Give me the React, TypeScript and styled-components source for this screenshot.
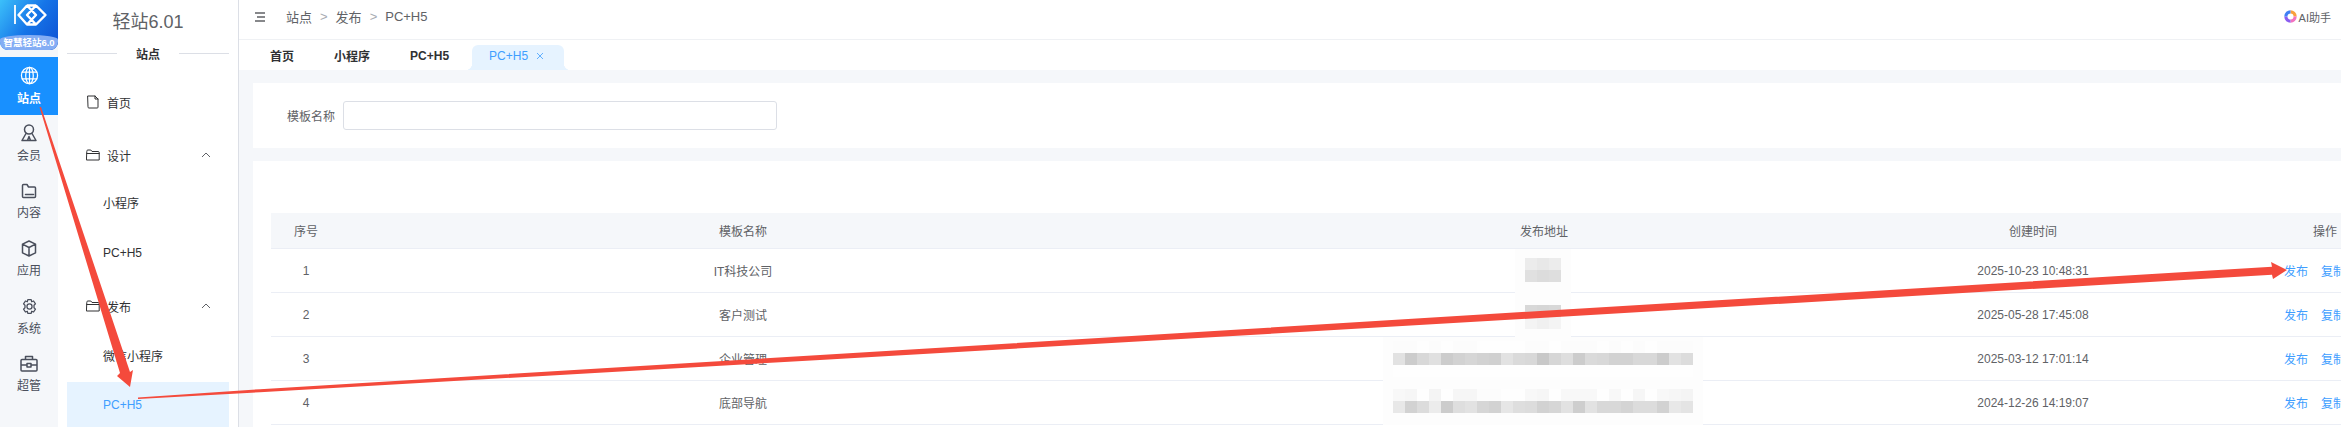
import styled, { createGlobalStyle } from "styled-components";
import { ReactNode } from "react";

const FONT = `"Liberation Sans", "Noto Sans CJK SC", sans-serif`;

const GlobalStyle = createGlobalStyle`
  html, body {
    margin: 0;
    height: 100%;
    overflow: hidden;
    background: #ffffff;
  }
  body {
    font-family: ${FONT};
    color: #606266;
  }
`;

const Page = styled.div`
  position: relative;
  display: flex;
  width: 2341px;
  height: 427px;
  overflow: hidden;
`;

const Rail = styled.aside`
  flex: 0 0 58px;
  background: #f5f7fa;
  display: flex;
  flex-direction: column;
`;

const LogoTile = styled.div`
  position: relative;
  height: 50px;
  margin-bottom: 7px;
  border-radius: 0 0 8px 8px;
  background: linear-gradient(125deg, #3cc0fa 0%, #1675e8 50%, #0d4fd2 100%);
  overflow: hidden;
`;

const LogoBand = styled.div`
  position: absolute;
  left: 0;
  right: 0;
  bottom: 0;
  height: 15px;
  border-radius: 50% 50% 8px 8px / 30% 30% 8px 8px;
  background: #84adf4;
  color: #ffffff;
  font-size: 9.5px;
  font-weight: 700;
  line-height: 15px;
  text-align: center;
  white-space: nowrap;
`;

const RailItem = styled.div<{ $active?: boolean }>`
  height: ${({ $active }) => ($active ? "58px" : "57.6px")};
  flex: none;
  display: flex;
  flex-direction: column;
  align-items: center;
  justify-content: center;
  gap: 4px;
  font-size: 12px;
  font-weight: ${({ $active }) => ($active ? 700 : 400)};
  color: ${({ $active }) => ($active ? "#ffffff" : "#4a4f5c")};
  background: ${({ $active }) => ($active ? "#1890ff" : "transparent")};
  svg {
    display: block;
  }
`;

const SubNav = styled.aside`
  flex: none;
  width: 162px;
  border-right: 1px solid #dcdfe6;
  padding: 0 9px;
  display: flex;
  flex-direction: column;
`;

const SubTitle = styled.div`
  height: 44px;
  line-height: 44px;
  text-align: center;
  font-size: 18px;
  color: #606266;
`;

const Divider = styled.div`
  display: flex;
  align-items: center;
  height: 18px;
  font-size: 12px;
  font-weight: 700;
  color: #303133;
  margin-bottom: 10px;
  &::before,
  &::after {
    content: "";
    flex: 1;
    height: 1px;
    background: #dcdfe6;
  }
  span {
    padding: 0 19px;
  }
`;

const NavRow = styled.div<{ $height: number; $active?: boolean; $indent?: boolean; $below?: number }>`
  height: ${({ $height }) => $height}px;
  box-sizing: border-box;
  padding-bottom: ${({ $below }) => $below ?? 0}px;
  display: flex;
  align-items: center;
  gap: 7px;
  padding-left: ${({ $indent }) => ($indent ? "36px" : "19px")};
  font-size: 12px;
  color: ${({ $active }) => ($active ? "#409eff" : "#303133")};
  background: ${({ $active }) => ($active ? "#e6f3ff" : "transparent")};
`;

const Chevron = styled.svg`
  margin-left: auto;
  margin-right: 18px;
`;

const Main = styled.main`
  flex: 1;
  min-width: 0;
  display: flex;
  flex-direction: column;
  background: #f5f7fa;
`;

const TopBar = styled.header`
  flex: none;
  background: #ffffff;
  border-bottom: 1px solid #eff1f4;
  display: flex;
  align-items: center;
  padding: 0 10px 6px 15px;
  height: 33px;
  font-size: 13px;
  color: #606266;
`;

const Crumbs = styled.div`
  display: flex;
  align-items: center;
  gap: 8px;
  margin-left: 20px;
  i {
    font-style: normal;
    color: #a8abb2;
  }
`;

const Assistant = styled.div`
  margin-left: auto;
  display: flex;
  align-items: center;
  gap: 2px;
  font-size: 11px;
`;

const TabBar = styled.nav`
  height: 30px;
  flex: none;
  background: #ffffff;
  display: flex;
  align-items: flex-end;
  padding-left: 14px;
`;

const Tab = styled.div<{ $active?: boolean }>`
  position: relative;
  height: 25px;
  padding: 0 ${({ $active }) => ($active ? "20px" : "17px")} 4px 17px;
  margin-right: 6px;
  box-sizing: border-box;
  display: flex;
  align-items: center;
  gap: 8px;
  font-size: 12px;
  font-weight: ${({ $active }) => ($active ? 400 : 700)};
  color: ${({ $active }) => ($active ? "#409eff" : "#303133")};
  background: ${({ $active }) => ($active ? "#e6f3ff" : "transparent")};
  border-radius: 6px 6px 0 0;
  ${({ $active }) =>
    $active &&
    `
    &::before,
    &::after {
      content: "";
      position: absolute;
      bottom: 0;
      width: 7px;
      height: 7px;
    }
    &::before {
      left: -7px;
      background: radial-gradient(circle at 0 0, transparent 7px, #e6f3ff 7.5px);
    }
    &::after {
      right: -7px;
      background: radial-gradient(circle at 100% 0, transparent 7px, #e6f3ff 7.5px);
    }
  `}
`;

const Panel = styled.section<{ $height?: number }>`
  background: #ffffff;
  margin: 13px 0 0 14px;
  ${({ $height }) => ($height ? `height: ${$height}px;` : "flex: 1;")}
`;

const FilterRow = styled.div`
  height: 65px;
  display: flex;
  align-items: center;
  padding-left: 34px;
  gap: 8px;
  font-size: 12px;
  color: #606266;
`;

const FakeInput = styled.div`
  width: 432px;
  height: 27px;
  border: 1px solid #dcdfe6;
  border-radius: 3px;
  background: #ffffff;
`;

const TablePanel = styled(Panel)`
  padding: 52px 0 0 18px;
`;

const Row = styled.div<{ $head?: boolean }>`
  display: grid;
  grid-template-columns: 70px 804px 798px 180px 404px;
  height: ${({ $head }) => ($head ? "36px" : "44px")};
  box-sizing: border-box;
  border-bottom: 1px solid #ebeef5;
  background: ${({ $head }) => ($head ? "#f5f7fa" : "#ffffff")};
  font-size: 12px;
  color: #606266;
  width: 2256px;
`;

const Cell = styled.div`
  display: flex;
  align-items: center;
  justify-content: center;
  white-space: nowrap;
`;

const Actions = styled.div`
  display: flex;
  align-items: center;
  gap: 13px;
  padding-left: 161px;
  color: #409eff;
  white-space: nowrap;
`;

const Halo = styled.div`
  position: relative;
  align-self: stretch;
  margin: 0 3px -1px 0;
  padding: 0 10px;
  background: #fdfdfd;
  display: flex;
  align-items: center;
`;

const Mosaic = styled.div<{ $cols: number; $top?: number; $bottom?: number }>`
  display: grid;
  grid-template-columns: repeat(${({ $cols }) => $cols}, 12px);
  grid-auto-rows: 12px;
  margin-top: ${({ $top }) => $top ?? 0}px;
  margin-bottom: ${({ $bottom }) => $bottom ?? 0}px;
  span {
    display: block;
  }
`;

const Overlay = styled.svg`
  position: absolute;
  inset: 0;
  pointer-events: none;
`;

const stroke = {
  fill: "none",
  stroke: "currentColor",
  strokeWidth: 1.5,
  strokeLinecap: "round" as const,
  strokeLinejoin: "round" as const,
};

const GlobeIcon = () => (
  <svg width="19" height="19" viewBox="0 0 20 20" {...stroke} strokeWidth={1.3}>
    <circle cx="10" cy="10" r="8.5" />
    <ellipse cx="10" cy="10" rx="4" ry="8.5" />
    <path d="M2.400 6.500h15.200M2.400 13.500h15.200M10 1.500v17" />
  </svg>
);

const UserIcon = () => (
  <svg width="18" height="18" viewBox="0 0 18 18" {...stroke}>
    <circle cx="9" cy="5.500" r="4.500" />
    <path d="M6 9.500 2 16.500h14L12 9.500M9 12.500l1.500 4h-3z" />
  </svg>
);

const FolderRailIcon = () => (
  <svg width="16" height="16" viewBox="0 0 16 16" {...stroke}>
    <path d="M1.500 2.500q0-1 1-1h3.500l1.500 2.500h6q1 0 1 1V13.500q0 1-1 1h-11q-1 0-1-1zM4.500 11.500h8" />
  </svg>
);

const BoxIcon = () => (
  <svg width="16" height="17" viewBox="0 0 16 17" {...stroke}>
    <path d="M8 1 14.500 4.200v8.600L8 16 1.500 12.800V4.200zM1.500 4.200 8 7.500l6.500-3.300M8 7.500V16" />
  </svg>
);

const GearIcon = () => (
  <svg width="17" height="17" viewBox="0 0 20 20" {...stroke}>
    <circle cx="10" cy="10" r="3" />
    <path d="M8 2h4l.6 2.400 2.200-.9 2.200 3.400-1.700 1.700v2.800l1.700 1.700-2.200 3.400-2.200-.9L12 18H8l-.6-2.400-2.200.9-2.200-3.400 1.700-1.700V8.600L3 6.900l2.200-3.400 2.200.9z" />
  </svg>
);

const ToolboxIcon = () => (
  <svg width="18" height="17" viewBox="0 0 18 17" {...stroke}>
    <path d="M1 5.500q0-1 1-1h14q1 0 1 1V15q0 1-1 1H2q-1 0-1-1zM5.500 4.500V1.500h7v3M1 10h6M11 10h6M7 8.500h4V12H7z" />
  </svg>
);

const FileIcon = () => (
  <svg width="14" height="14" viewBox="0 0 14 14" {...stroke} strokeWidth={1}>
    <path d="M2 1h7l3 3v8.200q0 .8-.8.8H2.800q-.8 0-.8-.8zM9 1v3h3" />
  </svg>
);

const FolderIcon = () => (
  <svg width="14" height="14" viewBox="0 0 14 14" {...stroke} strokeWidth={1}>
    <path d="M.8 3q0-1 1-1h3l1.200 1.500h6.200q1 0 1 1V12H.8zM.8 5.500h12.400" />
  </svg>
);

const ChevronUp = () => (
  <Chevron width="10" height="10" viewBox="0 0 10 10" fill="none" stroke="#606266">
    <path d="M1 7 5 3l4 4" />
  </Chevron>
);

const MenuIcon = () => (
  <svg width="12" height="12" viewBox="0 0 12 12" stroke="#606266" strokeWidth="1.400">
    <path d="M1 2h10M3 6h8M1 10h10" />
  </svg>
);

const CloseIcon = () => (
  <svg width="8" height="8" viewBox="0 0 8 8" stroke="#409eff" strokeWidth="0.8">
    <path d="M1 1l6 6M7 1 1 7" />
  </svg>
);

const AiIcon = () => (
  <svg width="13" height="13" viewBox="0 0 14 14" fill="none" strokeWidth="3.400">
    <path d="M7 2a5 5 0 0 1 5 5" stroke="#f9a03c" />
    <path d="M12 7a5 5 0 0 1-5 5" stroke="#f272c0" />
    <path d="M7 12a5 5 0 0 1-5-5" stroke="#8a5cf0" />
    <path d="M2 7a5 5 0 0 1 5-5" stroke="#3f7ff5" />
  </svg>
);

const LogoMark = () => (
  <svg width="58" height="30" viewBox="0 0 58 30" fill="none" stroke="#ffffff" strokeLinejoin="round">
    <path d="M15 5v19" strokeWidth="1.800" />
    <path d="M27 5.500 18.500 15 27 24.500 36 15zM36 5.500 45.500 15 36 24.500 27 15zM27 5.500h9M27 24.500h9" strokeWidth="2.400" />
  </svg>
);

const RED = "#f44a3c";

// the reviewer's arrows drawn over the page
const Arrows = () => (
  <Overlay width="2341" height="427" viewBox="0 0 2341 427">
    <polygon
      fill={RED}
      points="39.500,107 41,107 130,372 133,370 130,387 117,376 120,373"
    />
    <polygon
      fill={RED}
      points="138,397.500 260,389.200 820,355 1540,311 2272,266.800 2271,262 2287,270 2273,279 2272,274.800 1540,318 820,360 260,392.200 138,399"
    />
  </Overlay>
);

// blurred address cells: one grey value per mosaic block
const blocks = (greys: number[]) =>
  greys.map((g, i) => <span key={i} style={{ background: `rgb(${g},${g},${g})` }} />);

const LONG_DARK = [226, 204, 216, 224, 204, 210, 214, 210, 208, 226, 218, 216, 200, 214, 222, 204, 218, 216, 210, 210, 216, 216, 204, 226, 220];
const LONG_DARK_2 = [232, 210, 220, 236, 204, 222, 226, 214, 210, 230, 222, 220, 210, 214, 226, 206, 226, 216, 216, 212, 220, 220, 210, 232, 228];
const LONG_PALE = [252, 252, 254, 252, 254, 252, 252, 254, 254, 254, 254, 252, 252, 254, 252, 252, 252, 254, 252, 254, 252, 254, 252, 252, 252];
const LONG_PALE_2 = [248, 246, 254, 244, 254, 246, 246, 252, 252, 254, 254, 248, 246, 254, 248, 248, 248, 254, 248, 254, 246, 254, 248, 246, 244];

const rows: { name: string; time: string; address: ReactNode }[] = [
  {
    name: "IT科技公司",
    time: "2025-10-23 10:48:31",
    address: <Mosaic $cols={3} $bottom={3}>{blocks([236, 232, 236, 224, 220, 222])}</Mosaic>,
  },
  {
    name: "客户测试",
    time: "2025-05-28 17:45:08",
    address: <Mosaic $cols={3} $top={4}>{blocks([216, 214, 216, 244, 240, 244])}</Mosaic>,
  },
  {
    name: "企业管理",
    time: "2025-03-12 17:01:14",
    address: <Mosaic $cols={25}>{blocks([...LONG_PALE, ...LONG_DARK, ...LONG_PALE.map(() => 254)])}</Mosaic>,
  },
  {
    name: "底部导航",
    time: "2024-12-26 14:19:07",
    address: <Mosaic $cols={25} $bottom={4}>{blocks([...LONG_PALE_2, ...LONG_DARK_2])}</Mosaic>,
  },
];

const railItems = [
  { label: "站点", icon: <GlobeIcon />, active: true },
  { label: "会员", icon: <UserIcon /> },
  { label: "内容", icon: <FolderRailIcon /> },
  { label: "应用", icon: <BoxIcon /> },
  { label: "系统", icon: <GearIcon /> },
  { label: "超管", icon: <ToolboxIcon /> },
];

export default function App() {
  return (
    <Page>
      <GlobalStyle />
      <Rail>
        <LogoTile>
          <LogoMark />
          <LogoBand>智慧轻站6.0</LogoBand>
        </LogoTile>
        {railItems.map((item) => (
          <RailItem key={item.label} $active={item.active}>
            {item.icon}
            {item.label}
          </RailItem>
        ))}
      </Rail>

      <SubNav>
        <SubTitle>轻站6.01</SubTitle>
        <Divider>
          <span>站点</span>
        </Divider>
        <NavRow $height={60}>
          <FileIcon />
          首页
        </NavRow>
        <NavRow $height={46}>
          <FolderIcon />
          设计
          <ChevronUp />
        </NavRow>
        <NavRow $indent $height={48}>小程序</NavRow>
        <NavRow $indent $height={54}>PC+H5</NavRow>
        <NavRow $height={52}>
          <FolderIcon />
          发布
          <ChevronUp />
        </NavRow>
        <NavRow $indent $height={50} $below={4}>微信小程序</NavRow>
        <NavRow $indent $active $height={45}>PC+H5</NavRow>
      </SubNav>

      <Main>
        <TopBar>
          <MenuIcon />
          <Crumbs>
            站点 <i>&gt;</i> 发布 <i>&gt;</i> PC+H5
          </Crumbs>
          <Assistant>
            <AiIcon />
            AI助手
          </Assistant>
        </TopBar>
        <TabBar>
          <Tab>首页</Tab>
          <Tab>小程序</Tab>
          <Tab>PC+H5</Tab>
          <Tab $active>
            PC+H5
            <CloseIcon />
          </Tab>
        </TabBar>
        <Panel $height={65}>
          <FilterRow>
            模板名称
            <FakeInput />
          </FilterRow>
        </Panel>
        <TablePanel>
          <Row $head>
            <Cell>序号</Cell>
            <Cell>模板名称</Cell>
            <Cell>发布地址</Cell>
            <Cell>创建时间</Cell>
            <Cell>操作</Cell>
          </Row>
          {rows.map((row, i) => (
            <Row key={row.name}>
              <Cell>{i + 1}</Cell>
              <Cell>{row.name}</Cell>
              <Cell>
                <Halo>{row.address}</Halo>
              </Cell>
              <Cell>{row.time}</Cell>
              <Actions>
                <span>发布</span>
                <span>复制</span>
              </Actions>
            </Row>
          ))}
        </TablePanel>
      </Main>
      <Arrows />
    </Page>
  );
}
